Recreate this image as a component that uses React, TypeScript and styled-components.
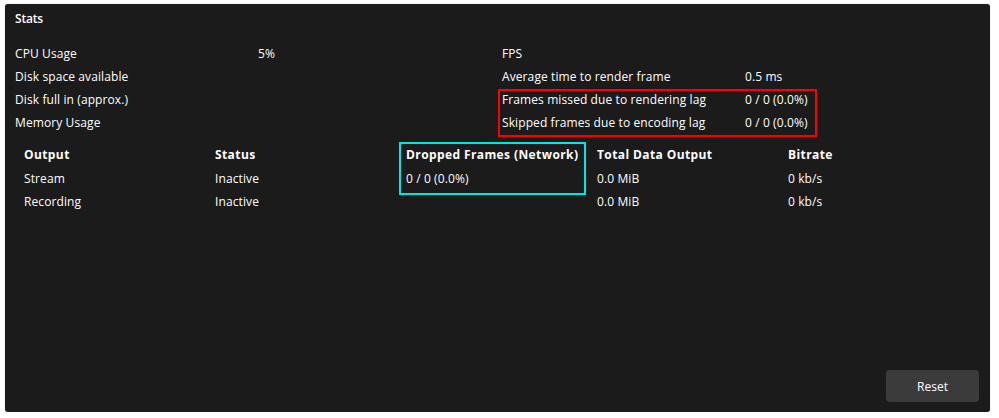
import React from "react";
import styled, { createGlobalStyle } from "styled-components";

const GlobalStyle = createGlobalStyle`
  html, body {
    margin: 0;
    padding: 0;
    background: #ffffff;
  }
  body {
    font-family: "Open Sans", "Noto Sans", "Liberation Sans", sans-serif;
    font-size: 12px;
    color: #ffffff;
  }
`;

const Panel = styled.div`
  box-sizing: border-box;
  margin: 4px 0 0 5px;
  width: 985px;
  height: 408px;
  background: #1b1b1b;
  border-radius: 3px;
  box-shadow: 0 0 1px rgba(0, 0, 0, 0.35);
  padding: 3px 11px 10px 10px;
  display: flex;
  flex-direction: column;
`;

const Title = styled.div`
  line-height: 24px;
  font-weight: 600;
  letter-spacing: -0.2px;
`;

const StatsGrid = styled.div`
  margin-top: 11px;
  display: grid;
  grid-template-columns: 487px 1fr;
  letter-spacing: 0.1px;
`;

const StatColumn = styled.div`
  position: relative;
  display: flex;
  flex-direction: column;
`;

const StatRow = styled.div`
  display: grid;
  grid-template-columns: 243px 1fr;
  height: 23px;
  line-height: 23px;
  white-space: nowrap;
`;

const Highlight = styled.div<{ $color: string }>`
  position: absolute;
  box-sizing: border-box;
  border: 2px solid ${(p) => p.$color};
  pointer-events: none;
`;

const OutputTable = styled.div`
  position: relative;
  margin-top: 9px;
  display: grid;
  grid-template-columns: repeat(5, 191px);
  letter-spacing: 0.1px;
`;

const HeaderCell = styled.div`
  padding-left: 9px;
  height: 24px;
  line-height: 24px;
  font-weight: 700;
  letter-spacing: 0.4px;
  white-space: nowrap;
`;

const Cell = styled.div`
  padding-left: 9px;
  height: 23px;
  line-height: 23px;
  white-space: nowrap;
`;

const Footer = styled.div`
  margin-top: auto;
  display: flex;
  justify-content: flex-end;
`;

const ResetButton = styled.button`
  width: 93px;
  height: 32px;
  border: none;
  border-radius: 4px;
  background: #3b3b3b;
  color: #ffffff;
  font-family: inherit;
  font-size: 12px;
  cursor: pointer;
`;

const leftStats: [string, string][] = [
  ["CPU Usage", "5%"],
  ["Disk space available", ""],
  ["Disk full in (approx.)", ""],
  ["Memory Usage", ""],
];

const rightStats: [string, string][] = [
  ["FPS", ""],
  ["Average time to render frame", "0.5 ms"],
  ["Frames missed due to rendering lag", "0 / 0 (0.0%)"],
  ["Skipped frames due to encoding lag", "0 / 0 (0.0%)"],
];

const headers = ["Output", "Status", "Dropped Frames (Network)", "Total Data Output", "Bitrate"];
const rows = [
  ["Stream", "Inactive", "0 / 0 (0.0%)", "0.0 MiB", "0 kb/s"],
  ["Recording", "Inactive", "", "0.0 MiB", "0 kb/s"],
];

export default function App() {
  return (
    <>
      <GlobalStyle />
      <Panel>
        <Title>Stats</Title>
        <StatsGrid>
          <StatColumn>
            {leftStats.map(([k, v]) => (
              <StatRow key={k}>
                <span>{k}</span>
                <span>{v}</span>
              </StatRow>
            ))}
          </StatColumn>
          <StatColumn>
            {rightStats.map(([k, v]) => (
              <StatRow key={k}>
                <span>{k}</span>
                <span>{v}</span>
              </StatRow>
            ))}
            <Highlight $color="#ff0000" style={{ left: -4, top: 47, width: 319, height: 48 }} />
          </StatColumn>
        </StatsGrid>
        <OutputTable>
          {headers.map((h) => (
            <HeaderCell key={h}>{h}</HeaderCell>
          ))}
          {rows.map((r, i) =>
            r.map((c, j) => <Cell key={`${i}-${j}`}>{c}</Cell>)
          )}
          <Highlight $color="#00e5e5" style={{ left: 384, top: -1, width: 187, height: 53 }} />
        </OutputTable>
        <Footer>
          <ResetButton>Reset</ResetButton>
        </Footer>
      </Panel>
    </>
  );
}
